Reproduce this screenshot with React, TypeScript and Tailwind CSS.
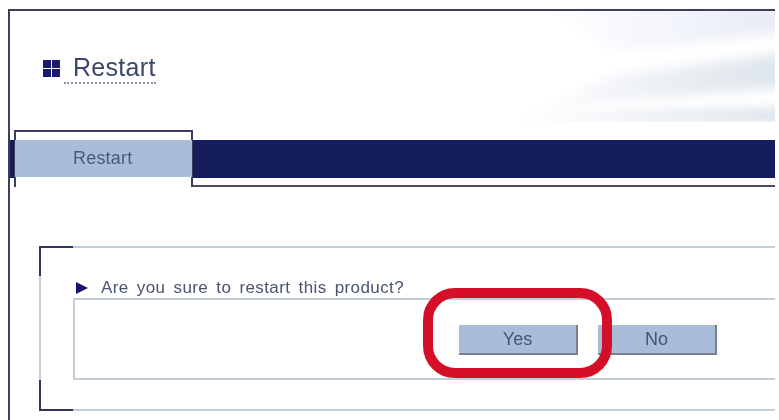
import { Fragment } from 'react';

function HeaderStreaks() {
  return (
    <svg className="absolute right-0 top-0" width="290" height="112" viewBox="0 0 290 112">
      <defs>
        <linearGradient id="fade" x1="0" x2="1" y1="0" y2="0">
          <stop offset="0" stopColor="#ffffff" />
          <stop offset="0.3" stopColor="#f1f3f8" />
          <stop offset="1" stopColor="#d3dde5" />
        </linearGradient>
        <linearGradient id="fadeTop" x1="0" x2="1" y1="0" y2="0">
          <stop offset="0" stopColor="#ffffff" />
          <stop offset="0.5" stopColor="#f4f6fc" />
          <stop offset="1" stopColor="#e8ebf4" />
        </linearGradient>
        <filter id="soft">
          <feGaussianBlur stdDeviation="6" />
        </filter>
      </defs>
      <g filter="url(#soft)">
        <polygon points="50,-10 300,-10 300,22 130,40" fill="url(#fadeTop)" />
        <polygon points="40,104 130,64 300,42 300,76 130,90" fill="url(#fade)" opacity="0.8" />
        <polygon points="20,108 150,100 300,98 300,110 20,112" fill="url(#fade)" />
      </g>
      <rect x="0" y="111" width="290" height="1" fill="#ffffff" />
    </svg>
  );
}

function TitleIcon() {
  return (
    <svg width="17" height="17" viewBox="0 0 17 17" className="shrink-0">
      <rect x="0" y="0" width="8" height="8" fill="#1a1a6e" />
      <rect x="9" y="0" width="8" height="8" fill="#1a1a6e" />
      <rect x="0" y="9" width="8" height="8" fill="#1a1a6e" />
      <rect x="9" y="9" width="8" height="8" fill="#1a1a6e" />
    </svg>
  );
}

function TabBar() {
  return (
    <div className="flex h-[57px]">
      <div className="w-1 pt-[10px]">
        <div className="h-[38px] bg-[#161d5c]" />
      </div>
      <div className="w-[179px] shrink-0 border-x-2 border-t-2 border-[#3c3f5c] pt-[8px]">
        <div className="h-[37px] -mx-[1px] bg-[#a9bdd8] pl-[58px] text-[18px] leading-[37px] tracking-[0.2px] text-[#4a5b80]">
          Restart
        </div>
      </div>
      <div className="flex-1 border-b-2 border-[#4a4c66] pt-[10px]">
        <div className="h-[38px] bg-[#161d5c]" />
      </div>
    </div>
  );
}

function Corner({ bottom }: { bottom?: boolean }) {
  return (
    <div
      className={
        bottom
          ? 'absolute -left-[2px] -bottom-[2px] h-[31px] w-[34px] border-b-2 border-l-2 border-[#33365a]'
          : 'absolute -left-[2px] -top-[2px] h-[30px] w-[34px] border-t-2 border-l-2 border-[#33365a]'
      }
    />
  );
}

function ActionButton({ label }: { label: string }) {
  return (
    <button className="h-[30px] w-[119px] border-r-2 border-b-2 border-[#76828f] bg-[#a9bdd8] text-[18px] leading-[28px] text-[#44547a]">
      {label}
    </button>
  );
}

export default function App() {
  return (
    <Fragment>
      <div className="relative h-[420px] w-[779px] overflow-hidden bg-white pl-2 pr-1 pt-[9px] font-['Liberation_Sans',Arial,sans-serif] blur-[0.6px]">
        <div className="h-full border-l-2 border-t-2 border-[#3c3f5c]">
          <div className="relative h-[119px]">
            <HeaderStreaks />
            <div className="flex items-start gap-[4px] pl-[33px] pt-[49px]">
              <TitleIcon />
              <div className="-mt-[6px] border-b-2 border-dotted border-[#8f93a8] pl-[9px] pb-[1px] text-[25px] leading-[27px] tracking-[0.3px] text-[#3c4668]">
                Restart
              </div>
            </div>
          </div>

          <TabBar />

          <div className="relative ml-[29px] mt-[59px] h-[165px] border-y-2 border-l-2 border-[#c3cedb]">
            <Corner />
            <Corner bottom />
            <div className="flex h-[50px] items-center gap-[13px] pl-[35px] pt-[30px] text-[17px] leading-[20px] tracking-[0.4px] [word-spacing:3px] text-[#4a5472]">
              <svg width="12" height="12" viewBox="0 0 12 12" className="shrink-0">
                <path d="M0 0 L12 6 L0 12 Z" fill="#17176b" />
              </svg>
              <span>Are you sure to restart this product?</span>
            </div>
            <div className="ml-[32px] flex h-[82px] gap-[20px] border-y-2 border-l-2 border-[#c3cedb] pl-[384px] pt-[25px]">
              <ActionButton label="Yes" />
              <ActionButton label="No" />
            </div>
          </div>
        </div>

        <div className="absolute left-[423px] top-[288px] h-[90px] w-[189px] rounded-[32px] border-[10px] border-[#d40f27]" />
      </div>
    </Fragment>
  );
}
